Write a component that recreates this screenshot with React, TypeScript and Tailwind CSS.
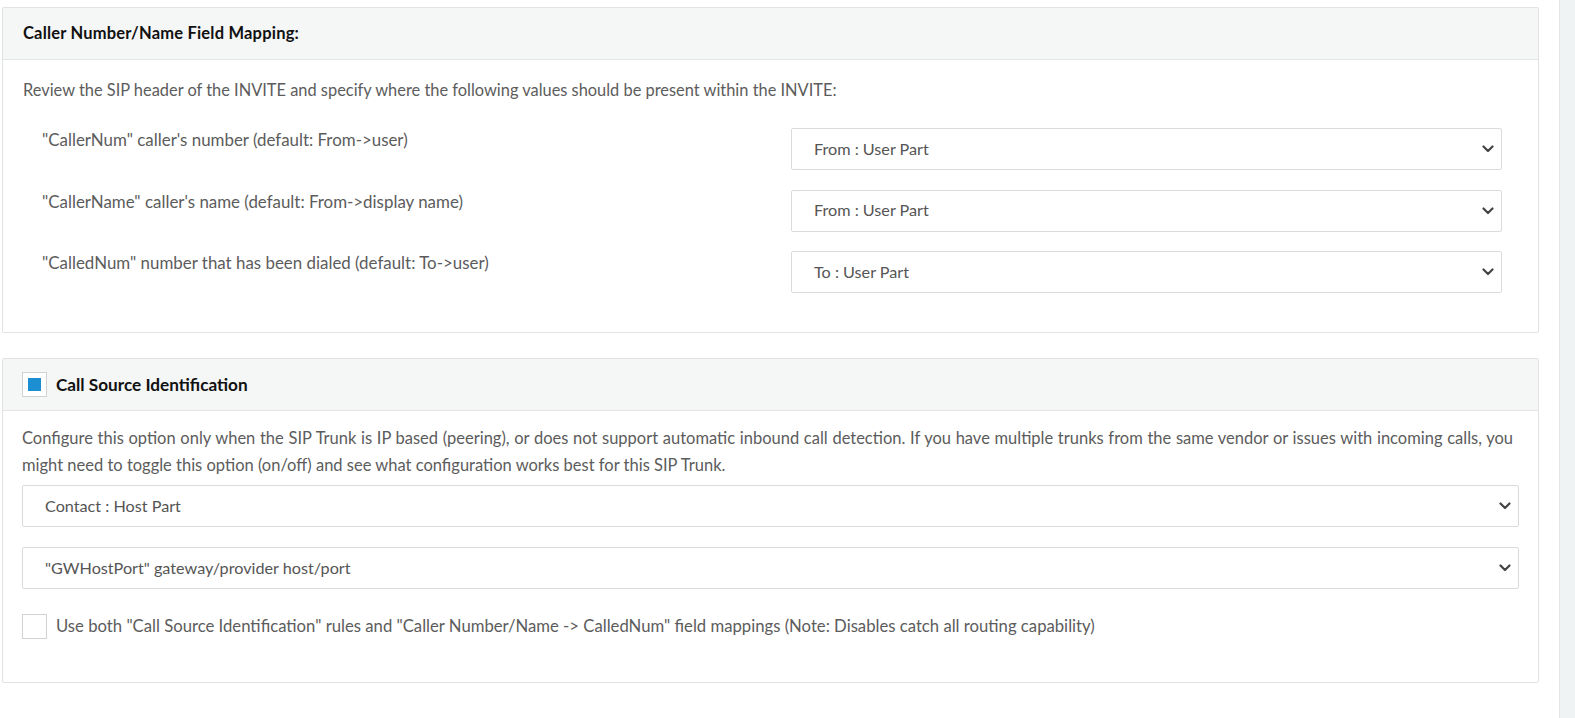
import React from "react";

const Chevron = () => (
  <svg width="12" height="8" viewBox="0 0 12 8" className="shrink-0">
    <polyline points="1.5,1.5 6,6 10.5,1.5" fill="none" stroke="#444" strokeWidth="2.2" strokeLinecap="round" strokeLinejoin="round" />
  </svg>
);

const Select = ({ text, className = "" }: { text: string; className?: string }) => (
  <div className={`flex items-center justify-between h-[42px] border border-[#d9dcdd] rounded-[2px] bg-white pl-[22px] pr-[7px] text-[16.2px] text-[#555] ${className}`}>
    <span>{text}</span>
    <Chevron />
  </div>
);

const rows = [
  { label: '"CallerNum" caller\'s number (default: From->user)', value: "From : User Part" },
  { label: '"CallerName" caller\'s name (default: From->display name)', value: "From : User Part" },
  { label: '"CalledNum" number that has been dialed (default: To->user)', value: "To : User Part" },
];

export default function App() {
  return (
    <div className="flex w-[1575px] h-[718px] bg-white overflow-hidden" style={{ fontFamily: "Lato, 'Open Sans', sans-serif" }}>
      <div className="flex-1 pl-[2px] pr-[20px] pt-[7px]">
        {/* Panel 1 */}
        <div className="border border-[#e0e2e3] rounded-[2px]">
          <div className="h-[52px] bg-[#f5f6f6] border-b border-[#e3e5e6] flex items-center pl-[20px] text-[16.5px] tracking-[0.2px] font-bold text-[#111]">
            Caller Number/Name Field Mapping:
          </div>
          <div className="px-[20px] pt-[18px] pb-[39px]">
            <div className="text-[16.4px] leading-[24px] text-[#5c5c5c]">
              Review the SIP header of the INVITE and specify where the following values should be present within the INVITE:
            </div>
            <div className="mt-[26px] flex flex-col gap-[19.5px]">
              {rows.map((r, i) => (
                <div key={i} className="flex">
                  <div className="w-[768px] pl-[19px] text-[16.9px] leading-[24px] text-[#5c5c5c]">{r.label}</div>
                  <Select text={r.value} className="w-[711px]" />
                </div>
              ))}
            </div>
          </div>
        </div>

        {/* Panel 2 */}
        <div className="mt-[25px] border border-[#e0e2e3] rounded-[2px]">
          <div className="h-[52px] bg-[#f5f6f6] border-b border-[#e3e5e6] flex items-center pl-[19px]">
            <div className="w-[25px] h-[25px] border border-[#cfd3d5] bg-white flex items-center justify-center">
              <div className="w-[13px] h-[13px] bg-[#1b8fd1]" />
            </div>
            <span className="ml-[9px] text-[17.2px] font-bold text-[#111]">Call Source Identification</span>
          </div>
          <div className="px-[19px] pt-[14px] pb-[43px]">
            <div className="text-[16.5px] leading-[27px] text-[#5c5c5c]">
              <div className="mr-[6px] text-justify [text-align-last:justify]">
                Configure this option only when the SIP Trunk is IP based (peering), or does not support automatic inbound call detection. If you have multiple trunks from the same vendor or issues with incoming calls, you
              </div>
              <div>might need to toggle this option (on/off) and see what configuration works best for this SIP Trunk.</div>
            </div>
            <Select text="Contact : Host Part" className="mt-[6px]" />
            <Select text={'"GWHostPort" gateway/provider host/port'} className="mt-[20px]" />
            <div className="mt-[25px] flex items-center">
              <div className="w-[25px] h-[25px] border border-[#cfd3d5] bg-white" />
              <span className="ml-[9px] text-[16.7px] text-[#5c5c5c]">
                Use both "Call Source Identification" rules and "Caller Number/Name -&gt; CalledNum" field mappings (Note: Disables catch all routing capability)
              </span>
            </div>
          </div>
        </div>
      </div>
      <div className="w-[16px] h-full border-l border-[#e3e6e7] bg-[#f0f3f4]" />
    </div>
  );
}
